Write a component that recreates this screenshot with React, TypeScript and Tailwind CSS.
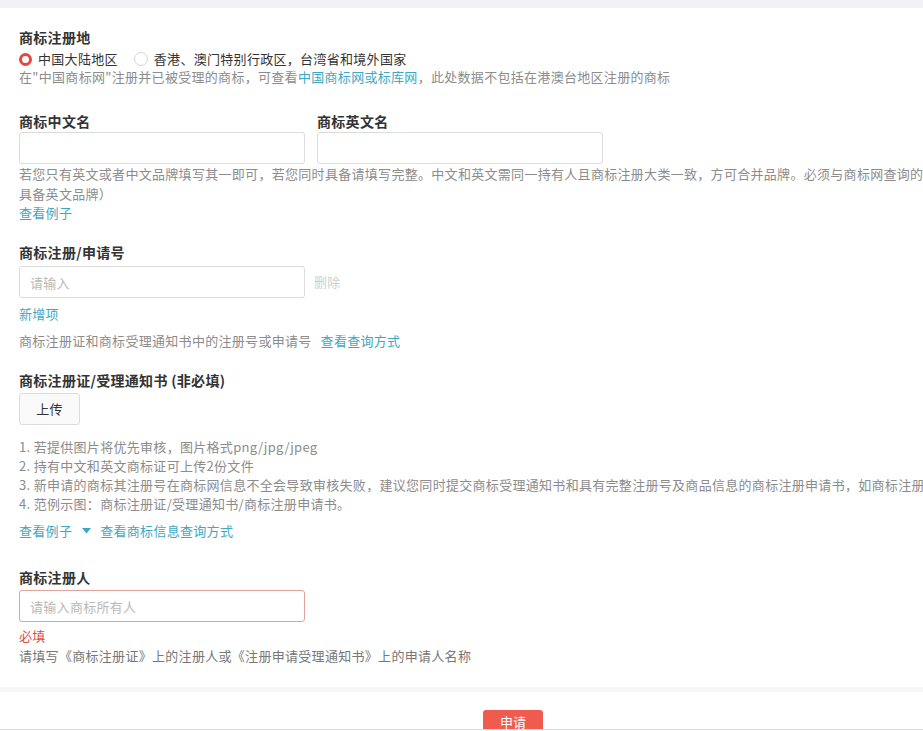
const FONT = { fontFamily: '"Noto Sans CJK SC", "Noto Sans", sans-serif' };

function Title({ children, className = '' }: { children: React.ReactNode; className?: string }) {
  return <div className={`text-[14px] leading-5 font-bold text-[#333] ${className}`}>{children}</div>;
}

function Radio({ checked, label }: { checked?: boolean; label: string }) {
  return (
    <label className="flex items-center gap-[6px]">
      {checked ? (
        <span className="w-[13px] h-[13px] rounded-full border-[3px] border-[#e5483f] bg-white" />
      ) : (
        <span className="w-[14px] h-[14px] rounded-full border border-[#d4d4d4] bg-white" />
      )}
      <span className="text-[#333]">{label}</span>
    </label>
  );
}

function Input({ placeholder = '', error = false }: { placeholder?: string; error?: boolean }) {
  return (
    <input
      placeholder={placeholder}
      style={FONT}
      className={`w-[286px] h-8 rounded-[3px] border px-[10px] text-[13px] outline-none placeholder:text-[#b8b8b8] ${
        error ? 'border-[#e0a49c]' : 'border-[#dcdcdc]'
      }`}
    />
  );
}

const link = 'text-[#3ea8c2]';

export default function App() {
  return (
    <div className="w-full min-h-screen bg-white overflow-hidden" style={FONT}>
      <div className="h-2 bg-[#f1f2f4]" />
      <div className="w-[1000px] pl-[19px] text-[13px] tracking-[0.3px] text-[#8c8c8c]">
        <Title className="mt-[19px]">商标注册地</Title>
        <div className="mt-[3px] h-[18px] flex items-center gap-4 leading-[18px]">
          <Radio checked label="中国大陆地区" />
          <Radio label="香港、澳门特别行政区，台湾省和境外国家" />
        </div>
        <div className="leading-[18px]">
          在"中国商标网"注册并已被受理的商标，可查看<span className={link}>中国商标网或标库网</span>，此处数据不包括在港澳台地区注册的商标
        </div>

        <div className="mt-[25px] flex gap-3">
          <div className="flex flex-col">
            <Title>商标中文名</Title>
            <div className="mt-px">
              <Input />
            </div>
          </div>
          <div className="flex flex-col">
            <Title>商标英文名</Title>
            <div className="mt-px">
              <Input />
            </div>
          </div>
        </div>
        <div className="leading-5 whitespace-nowrap">
          若您只有英文或者中文品牌填写其一即可，若您同时具备请填写完整。中文和英文需同一持有人且商标注册大类一致，方可合并品牌。必须与商标网查询的信息一致（如商标网中不
        </div>
        <div className="leading-5">具备英文品牌）</div>
        <div className={`leading-[18px] ${link}`}>查看例子</div>

        <Title className="mt-5">商标注册/申请号</Title>
        <div className="mt-1 flex items-center gap-[9px]">
          <Input placeholder="请输入" />
          <span className="text-[#cfcfcf]">删除</span>
        </div>
        <div className={`mt-[7px] leading-[18px] ${link}`}>新增项</div>
        <div className="mt-[9px] leading-[18px]">
          商标注册证和商标受理通知书中的注册号或申请号<span className={`ml-[9px] ${link}`}>查看查询方式</span>
        </div>

        <Title className="mt-5">商标注册证/受理通知书 (非必填)</Title>
        <button
          style={FONT}
          className="mt-[3px] w-[61px] h-8 rounded-[3px] border border-[#dcdcdc] bg-[#fafafa] text-[13px] text-[#333]"
        >
          上传
        </button>
        <div className="mt-3 leading-[19px] whitespace-nowrap">
          <div>1. 若提供图片将优先审核，图片格式png/jpg/jpeg</div>
          <div>2. 持有中文和英文商标证可上传2份文件</div>
          <div>
            3. 新申请的商标其注册号在商标网信息不全会导致审核失败，建议您同时提交商标受理通知书和具有完整注册号及商品信息的商标注册申请书，如商标注册证尚未下发
          </div>
          <div>4. 范例示图：商标注册证/受理通知书/商标注册申请书。</div>
        </div>
        <div className={`mt-[9px] h-[18px] leading-[18px] flex items-center ${link}`}>
          <span>查看例子</span>
          <svg width="9" height="6" viewBox="0 0 9 6" className="ml-[10px] mr-[9px]">
            <path d="M0 0 L9 0 L4.5 5.5 Z" fill="#3ea8c2" />
          </svg>
          <span>查看商标信息查询方式</span>
        </div>

        <Title className="mt-[27px]">商标注册人</Title>
        <div className="mt-[3px]">
          <Input placeholder="请输入商标所有人" error />
        </div>
        <div className="mt-[5px] leading-[18px] text-[#e5483f]">必填</div>
        <div className="mt-[2px] leading-[18px] text-[#777]">
          请填写《商标注册证》上的注册人或《注册申请受理通知书》上的申请人名称
        </div>
      </div>
      <div className="mt-[22px] h-[5px] bg-[#f6f6f6]" />
      <div className="h-[37px] overflow-hidden pl-[483px] pt-4">
        <button
          style={FONT}
          className="w-[60px] h-8 rounded-[3px] bg-[#f05b50] text-white text-[13px] leading-5 pb-2"
        >
          申请
        </button>
      </div>
      <div className="h-px bg-[#dadada]" />
    </div>
  );
}
